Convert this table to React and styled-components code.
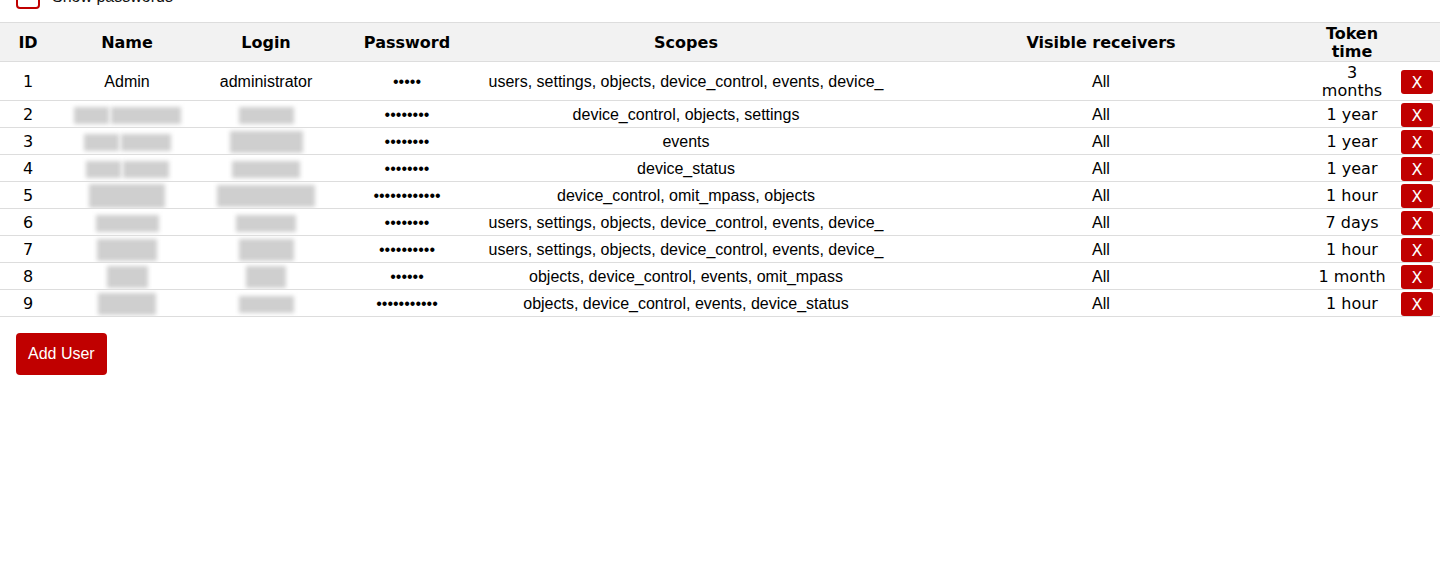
import React from 'react'
import styled, { createGlobalStyle } from 'styled-components'

const GlobalStyle = createGlobalStyle`
  html, body {
    margin: 0;
    padding: 0;
    background: #fff;
    overflow: hidden;
  }
  body {
    font-family: "DejaVu Sans", Verdana, sans-serif;
    color: #000;
  }
`

const RED = '#c00000'

const Page = styled.div`
  width: 1440px;
`

const ShowRow = styled.label`
  display: flex;
  align-items: center;
  gap: 12px;
  height: 24px;
  margin-top: -15px;
  padding-left: 16px;
  font-family: "Liberation Sans", Arial, sans-serif;
  font-size: 16px;
  color: #111;
`

const CheckBox = styled.span`
  width: 24px;
  height: 24px;
  box-sizing: border-box;
  border: 2px solid ${RED};
  border-radius: 4px;
  background: #fff;
`

const Table = styled.table`
  margin-top: 13px;
  width: 100%;
  border-collapse: collapse;
  table-layout: fixed;
  font-size: 16px;
`

const HeadRow = styled.tr`
  background: #f2f2f2;
  border-top: 1px solid #ddd;
  border-bottom: 1px solid #ddd;
`

const Th = styled.th`
  font-family: "DejaVu Sans", Verdana, sans-serif;
  font-weight: bold;
  font-size: 16px;
  line-height: 18px;
  padding: 2px ${p => p.$px || 1}px 0;
  text-align: center;
  vertical-align: middle;
`

const Row = styled.tr`
  border-bottom: 1px solid #ddd;
`

const Td = styled.td`
  font-family: ${p => p.$sans ? '"Liberation Sans", Arial, sans-serif' : '"DejaVu Sans", Verdana, sans-serif'};
  font-size: 16px;
  line-height: 18px;
  padding: 2px ${p => p.$px || 1}px 0;
  text-align: center;
  vertical-align: middle;
  white-space: ${p => p.$nowrap ? 'nowrap' : 'normal'};
  overflow: hidden;
`

const Blurred = styled.span`
  display: inline-block;
  vertical-align: middle;
  width: ${p => p.$w}px;
  height: ${p => p.$h || 17}px;
  margin-left: ${p => p.$gap || 0}px;
  background: #cfcfcf;
  filter: blur(2px);
`

const DeleteButton = styled.button`
  display: block;
  margin: 0 auto;
  width: 32px;
  height: 24px;
  padding: 0;
  border: none;
  border-radius: 3px;
  background: ${RED};
  color: #fff;
  font-family: "DejaVu Sans", Verdana, sans-serif;
  font-size: 16px;
  line-height: 23px;
  cursor: pointer;
`

const AddButton = styled.button`
  margin: 16px 0 0 16px;
  height: 42px;
  padding: 0 12px;
  border: none;
  border-radius: 4px;
  background: ${RED};
  color: #fff;
  font-family: "Liberation Sans", Arial, sans-serif;
  font-size: 16px;
  cursor: pointer;
`

const ALL_SCOPES = 'users, settings, objects, device_control, events, device_'

const users = [
  { id: 1, name: 'Admin', login: 'administrator', pass: 5, scopes: ALL_SCOPES, time: '3 months' },
  { id: 2, nameBlur: [35, 70], loginBlur: 55, pass: 8, scopes: 'device_control, objects, settings', time: '1 year' },
  { id: 3, nameBlur: [35, 50], loginBlur: 73, loginH: 22, pass: 8, scopes: 'events', time: '1 year' },
  { id: 4, nameBlur: [35, 46], loginBlur: 68, pass: 8, scopes: 'device_status', time: '1 year' },
  { id: 5, nameBlur: [76], nameH: 24, loginBlur: 98, loginH: 22, pass: 12, scopes: 'device_control, omit_mpass, objects', time: '1 hour' },
  { id: 6, nameBlur: [63], loginBlur: 60, pass: 8, scopes: ALL_SCOPES, time: '7 days' },
  { id: 7, nameBlur: [60], nameH: 22, loginBlur: 55, loginH: 22, pass: 10, scopes: ALL_SCOPES, time: '1 hour' },
  { id: 8, nameBlur: [41], nameH: 22, loginBlur: 40, loginH: 22, pass: 6, scopes: 'objects, device_control, events, omit_mpass', time: '1 month' },
  { id: 9, nameBlur: [58], nameH: 22, loginBlur: 55, pass: 11, scopes: 'objects, device_control, events, device_status', time: '1 hour' },
]

export default function App() {
  return (
    <Page>
      <GlobalStyle />
      <ShowRow>
        <CheckBox />
        Show passwords
      </ShowRow>
      <Table>
        <colgroup>
          <col style={{ width: 56 }} />
          <col style={{ width: 142 }} />
          <col style={{ width: 136 }} />
          <col style={{ width: 146 }} />
          <col style={{ width: 412 }} />
          <col style={{ width: 418 }} />
          <col style={{ width: 84 }} />
          <col style={{ width: 46 }} />
        </colgroup>
        <thead>
          <HeadRow>
            <Th>ID</Th>
            <Th>Name</Th>
            <Th>Login</Th>
            <Th>Password</Th>
            <Th>Scopes</Th>
            <Th>Visible receivers</Th>
            <Th $px={7}>Token time</Th>
            <Th />
          </HeadRow>
        </thead>
        <tbody>
          {users.map(u => (
            <Row key={u.id}>
              <Td>{u.id}</Td>
              <Td $sans $nowrap>
                {u.name
                  ? u.name
                  : u.nameBlur.map((w, i) => (
                      <Blurred key={i} $w={w} $h={u.nameH} $gap={i ? 2 : 0} />
                    ))}
              </Td>
              <Td $sans $nowrap>
                {u.login ? u.login : <Blurred $w={u.loginBlur} $h={u.loginH} />}
              </Td>
              <Td $sans $nowrap>{'•'.repeat(u.pass)}</Td>
              <Td $sans $nowrap>{u.scopes}</Td>
              <Td $sans>All</Td>
              <Td $px={7}>{u.time}</Td>
              <Td>
                <DeleteButton>X</DeleteButton>
              </Td>
            </Row>
          ))}
        </tbody>
      </Table>
      <AddButton>Add User</AddButton>
    </Page>
  )
}
